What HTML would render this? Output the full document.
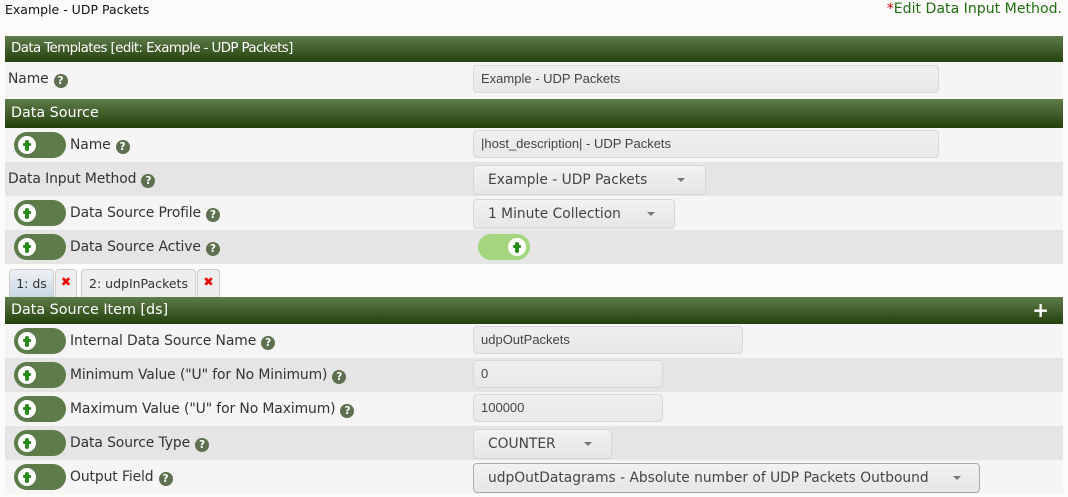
<!DOCTYPE html>
<html><head><style>
body{margin:0;width:1068px;height:497px;background:#fdfafa;font-family:"DejaVu Sans","Liberation Sans",sans-serif;font-size:12.5px;color:#333;position:relative;overflow:hidden}
.a{position:absolute}
.hd{position:absolute;left:5px;width:1058px;background:linear-gradient(#5e7b4a,#24410c);color:#fff;font-size:11.8px;line-height:26px;padding-left:6px;box-sizing:border-box}
.row{position:absolute;left:5px;width:1058px;height:34px}
.l{background:#f5f5f5}.g{background:#e5e5e5}
.lb{position:absolute;top:9px;color:#333;white-space:nowrap;font-size:13.9px;letter-spacing:-0.1px}
.q{display:inline-block;width:14px;height:14px;border-radius:50%;background:#5e7050;color:#fff;font-size:10.5px;line-height:14px;text-align:center;font-weight:bold;vertical-align:-1px;margin-left:5px;letter-spacing:0}
.tg{position:absolute;left:9px;top:4px;width:52px;height:26px;border-radius:13px;background:#5e7b4a}
.tg .k{position:absolute;left:4px;top:4px;width:18px;height:18px;border-radius:50%;background:#fff}
.tg .k:before{content:"";position:absolute;left:7px;top:4px;width:4px;height:11px;background:#2a8a1a;border-radius:2px}
.tg .k:after{content:"";position:absolute;left:5px;top:7px;width:8px;height:3px;background:#2a8a1a;border-radius:1px}
.in{position:absolute;height:28px;border:1px solid #d8d8d8;border-radius:4px;background:linear-gradient(#efefef,#e8e8e8);box-sizing:border-box;padding-left:7px;line-height:26px;font-family:"Liberation Sans",sans-serif;font-size:13px;color:#444}
.sel{position:absolute;height:30px;border:1px solid #d6d6d6;border-radius:4px;background:linear-gradient(#f2f2f2,#e6e6e6);box-sizing:border-box;padding-left:14px;line-height:28px;color:#444;font-size:13.8px}
.sel i{position:absolute;top:12px;width:0;height:0;border-left:4px solid transparent;border-right:4px solid transparent;border-top:4px solid #777}
</style></head><body>
<div class="a" style="left:5px;top:2px;font-size:12.5px;color:#111">Example - UDP Packets</div>
<div class="a" style="right:6px;top:1px;font-size:14.1px;color:#1f6f10"><span style="color:#d00">*</span>Edit Data Input Method.</div>

<div class="hd" style="top:36px;height:26px;font-size:13.4px;letter-spacing:-0.6px">Data Templates [edit: Example - UDP Packets]</div>
<div class="row l" style="top:62px;height:35px"><span class="lb" style="left:3px">Name<span class="q">?</span></span>
<div class="in" style="left:468px;top:3px;width:466px">Example - UDP Packets</div></div>

<div class="hd" style="top:99px;height:29px;line-height:29px;font-size:14.3px">Data Source</div>
<div class="row l" style="top:128px"><div class="tg"><div class="k"></div></div><span class="lb" style="left:65px">Name<span class="q">?</span></span>
<div class="in" style="left:468px;top:2px;width:466px">|host_description| - UDP Packets</div></div>
<div class="row g" style="top:162px"><span class="lb" style="left:3px">Data Input Method<span class="q">?</span></span>
<div class="sel" style="left:468px;top:3px;width:233px">Example - UDP Packets<i style="left:203px"></i></div></div>
<div class="row l" style="top:196px"><div class="tg"><div class="k"></div></div><span class="lb" style="left:65px">Data Source Profile<span class="q">?</span></span>
<div class="sel" style="left:468px;top:3px;width:202px">1 Minute Collection<i style="left:173px"></i></div></div>
<div class="row g" style="top:230px"><div class="tg"><div class="k"></div></div><span class="lb" style="left:65px">Data Source Active<span class="q">?</span></span>
<div class="tg" style="left:473px;background:#a3d67f"><div class="k" style="left:30px"></div></div></div>

<div class="a" style="left:9px;top:269px;width:45px;height:28px;border:1px solid #ccc;border-bottom:none;border-radius:4px 4px 0 0;background:linear-gradient(#eef2f5,#c9d7e2);box-sizing:border-box;text-align:center;line-height:28px;font-size:12.5px">1: ds</div>
<div class="a" style="left:55px;top:269px;width:22px;height:28px;border:1px solid #ccc;border-bottom:none;border-radius:4px 4px 0 0;background:#eee;box-sizing:border-box;text-align:center;line-height:24px;color:#e00;font-weight:bold">✖</div>
<div class="a" style="left:81px;top:269px;width:115px;height:28px;border:1px solid #ccc;border-bottom:none;border-radius:4px 4px 0 0;background:#eee;box-sizing:border-box;text-align:center;line-height:28px;font-size:12.5px">2: udpInPackets</div>
<div class="a" style="left:197px;top:269px;width:23px;height:28px;border:1px solid #ccc;border-bottom:none;border-radius:4px 4px 0 0;background:#eee;box-sizing:border-box;text-align:center;line-height:24px;color:#e00;font-weight:bold">✖</div>

<div class="hd" style="top:297px;height:27px;font-size:14.3px">Data Source Item [ds]<span style="position:absolute;right:14px;font-size:20px;font-weight:bold;line-height:27px">+</span></div>
<div class="row l" style="top:324px"><div class="tg"><div class="k"></div></div><span class="lb" style="left:65px">Internal Data Source Name<span class="q">?</span></span>
<div class="in" style="left:468px;top:2px;width:270px">udpOutPackets</div></div>
<div class="row g" style="top:358px"><div class="tg"><div class="k"></div></div><span class="lb" style="left:65px">Minimum Value ("U" for No Minimum)<span class="q">?</span></span>
<div class="in" style="left:468px;top:2px;width:190px">0</div></div>
<div class="row l" style="top:392px"><div class="tg"><div class="k"></div></div><span class="lb" style="left:65px">Maximum Value ("U" for No Maximum)<span class="q">?</span></span>
<div class="in" style="left:468px;top:2px;width:190px">100000</div></div>
<div class="row g" style="top:426px"><div class="tg"><div class="k"></div></div><span class="lb" style="left:65px">Data Source Type<span class="q">?</span></span>
<div class="sel" style="left:468px;top:3px;width:139px">COUNTER<i style="left:110px"></i></div></div>
<div class="row l" style="top:460px"><div class="tg"><div class="k"></div></div><span class="lb" style="left:65px">Output Field<span class="q">?</span></span>
<div class="sel" style="left:468px;top:3px;width:507px;border-color:#aaa">udpOutDatagrams - Absolute number of UDP Packets Outbound<i style="left:479px"></i></div></div>
</body></html>
